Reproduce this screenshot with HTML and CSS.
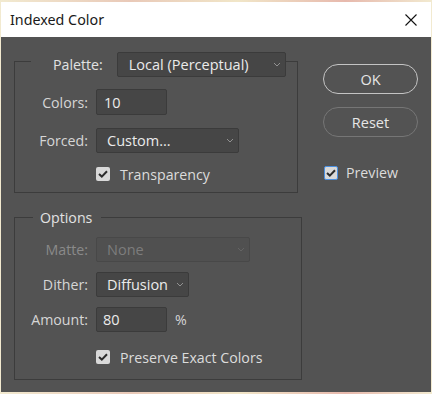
FILE: index.html
```html
<!DOCTYPE html>
<html lang="en">
<head>
    <meta charset="UTF-8">
    <meta name="viewport" content="width=device-width, initial-scale=1.0">
    <title>Indexed Color</title>
    <link rel="stylesheet" href="styles.css">
</head>
<body>
    <div class="dialog">
        <div class="titlebar">
            <span class="title">Indexed Color</span>
            <svg class="close" width="12" height="12" viewBox="0 0 12 12">
                <path d="M0.5 0.5 L11.5 11.5 M11.5 0.5 L0.5 11.5" stroke="#111" stroke-width="1.1" fill="none"/>
            </svg>
        </div>

        <div class="dialog-body">
            <div class="left-col">
                <!-- Palette group -->
                <div class="group group-palette">
                    <div class="group-head head-palette">
                        <span class="head-label">Palette:</span>
                        <div class="select select-palette">
                            <span>Local (Perceptual)</span>
                            <svg class="chev" width="8" height="5" viewBox="0 0 8 5"><path d="M1 1 L4 4 L7 1" stroke="#9a9a9a" stroke-width="0.9" fill="none"/></svg>
                        </div>
                    </div>
                    <div class="row row-colors">
                        <span class="label">Colors:</span>
                        <div class="field">10</div>
                    </div>
                    <div class="row row-forced">
                        <span class="label">Forced:</span>
                        <div class="select select-forced">
                            <span>Custom...</span>
                            <svg class="chev" width="8" height="5" viewBox="0 0 8 5"><path d="M1 1 L4 4 L7 1" stroke="#9a9a9a" stroke-width="0.9" fill="none"/></svg>
                        </div>
                    </div>
                    <div class="row row-check row-transp">
                        <span class="label"></span>
                        <span class="check">
                            <svg width="10" height="8" viewBox="0 0 10 8"><path d="M1 4 L3.8 6.6 L9 1.2" stroke="#2b2b2b" stroke-width="2" fill="none"/></svg>
                        </span>
                        <span class="check-text">Transparency</span>
                    </div>
                </div>

                <!-- Options group -->
                <div class="group group-options">
                    <div class="group-head head-options">
                        <span class="head-label">Options</span>
                    </div>
                    <div class="row row-matte disabled">
                        <span class="label">Matte:</span>
                        <div class="select select-matte">
                            <span>None</span>
                            <svg class="chev" width="8" height="5" viewBox="0 0 8 5"><path d="M1 1 L4 4 L7 1" stroke="#666" stroke-width="0.9" fill="none"/></svg>
                        </div>
                    </div>
                    <div class="row row-dither">
                        <span class="label">Dither:</span>
                        <div class="select select-dither">
                            <span>Diffusion</span>
                            <svg class="chev" width="8" height="5" viewBox="0 0 8 5"><path d="M1 1 L4 4 L7 1" stroke="#9a9a9a" stroke-width="0.9" fill="none"/></svg>
                        </div>
                    </div>
                    <div class="row row-amount">
                        <span class="label">Amount:</span>
                        <div class="field field-amount">80</div>
                        <span class="unit">%</span>
                    </div>
                    <div class="row row-check row-preserve">
                        <span class="label"></span>
                        <span class="check">
                            <svg width="10" height="8" viewBox="0 0 10 8"><path d="M1 4 L3.8 6.6 L9 1.2" stroke="#2b2b2b" stroke-width="2" fill="none"/></svg>
                        </span>
                        <span class="check-text">Preserve Exact Colors</span>
                    </div>
                </div>
            </div>

            <div class="right-col">
                <div class="btn btn-ok">OK</div>
                <div class="btn btn-reset">Reset</div>
                <div class="preview">
                    <span class="check check-focus">
                        <svg width="10" height="8" viewBox="0 0 10 8"><path d="M1 4 L3.8 6.6 L9 1.2" stroke="#2b2b2b" stroke-width="2" fill="none"/></svg>
                    </span>
                    <span class="check-text">Preview</span>
                </div>
            </div>
        </div>
    </div>
</body>
</html>
```

FILE: styles.css
```css
html, body {
    margin: 0;
    padding: 0;
}

body {
    width: 432px;
    height: 394px;
    background: linear-gradient(90deg, #f2ead0 0%, #e9c9b8 30%, #f1e6c8 55%, #e7b9ad 80%, #f2ead0 100%);
    font-family: "Open Sans", "Noto Sans", sans-serif;
    font-size: 14px;
    color: #d9d9d9;
    overflow: hidden;
}

.dialog {
    width: 430px;
    height: 390px;
    margin: 2px 1px 2px 1px;
    display: flex;
    flex-direction: column;
    background: #535353;
}

.titlebar {
    height: 35px;
    background: #ffffff;
    display: flex;
    align-items: center;
    justify-content: space-between;
    padding: 0 14px 0 9px;
    flex-shrink: 0;
}

.title {
    font-family: "Noto Sans", "Open Sans", sans-serif;
    font-size: 14.3px;
    color: #1a1a1a;
    margin-top: -1px;
}

.dialog-body {
    display: flex;
    padding: 0 13px;
}

.left-col {
    width: 289px;
    padding-top: 24px;
}

/* groups */
.group {
    border: 1px solid #3c3c3c;
    display: flex;
    flex-direction: column;
}

.group-palette {
    width: 282px;
    padding-bottom: 8px;
}

.group-options {
    width: 286px;
    margin-top: 24px;
    padding-bottom: 12px;
}

.group-head {
    align-self: flex-start;
    display: flex;
    align-items: center;
    background: #535353;
}

.head-palette {
    margin: -10px 0 0 16px;
    padding-left: 22px;
}

.head-palette .head-label {
    margin-right: 14px;
}

.head-options {
    margin: -10px 0 0 18px;
    padding: 0 9px 0 7px;
    height: 19px;
}

.head-label {
    color: #e2e2e2;
    font-size: 14.2px;
}

.row {
    display: flex;
    align-items: center;
}

.label {
    width: 73px;
    margin-right: 8px;
    text-align: right;
    color: #d6d6d6;
    font-size: 14.2px;
}

.row-colors { margin-top: 12px; }
.row-forced { margin-top: 13px; }
.row-transp { margin-top: 11px; height: 20px; }

.row-matte { margin-top: 10px; }
.row-dither { margin-top: 10px; }
.row-amount { margin-top: 10px; }
.row-preserve { margin-top: 15px; height: 20px; }

/* fields */
.select, .field {
    box-sizing: border-box;
    background: #464646;
    border: 1px solid #3b3b3b;
    border-radius: 2px;
    color: #ebebeb;
    font-size: 14.5px;
    display: flex;
    align-items: center;
}

.select {
    height: 25px;
    justify-content: space-between;
    padding: 0 4px 0 10px;
}

.select-palette {
    width: 169px;
    padding-left: 11px;
}

.select-forced {
    width: 143px;
}

.select-matte {
    width: 154px;
    background: #505050;
    border-color: #484848;
    color: #7d7d7d;
}

.select-dither {
    width: 93px;
}

.field {
    width: 71px;
    height: 26px;
    padding-left: 7px;
}

.field-amount {
    height: 25px;
    padding-left: 6px;
}

.unit {
    margin-left: 8px;
    color: #d6d6d6;
    font-size: 14.2px;
}

.disabled .label {
    color: #8a8a8a;
}

/* checkboxes */
.check {
    box-sizing: border-box;
    width: 14px;
    height: 14px;
    border-radius: 2px;
    background: #d9d9d9;
    display: flex;
    align-items: center;
    justify-content: center;
}

.check-focus {
    border: 1px solid #4a8fe0;
}

.check-text {
    margin-left: 10px;
    color: #dcdcdc;
    font-size: 14.2px;
}

/* right column */
.right-col {
    margin-left: 20px;
    padding-top: 27px;
    display: flex;
    flex-direction: column;
}

.btn {
    box-sizing: border-box;
    width: 95px;
    height: 30px;
    border-radius: 15px;
    display: flex;
    align-items: center;
    justify-content: center;
    font-size: 14.5px;
    color: #e6e6e6;
}

.btn-ok {
    border: 1.5px solid #c4c4c4;
}

.btn-reset {
    margin-top: 13px;
    border: 1px solid #767676;
}

.preview {
    display: flex;
    align-items: center;
    margin-top: 26px;
    margin-left: 1px;
}

.preview .check-text {
    margin-left: 8px;
}
```
